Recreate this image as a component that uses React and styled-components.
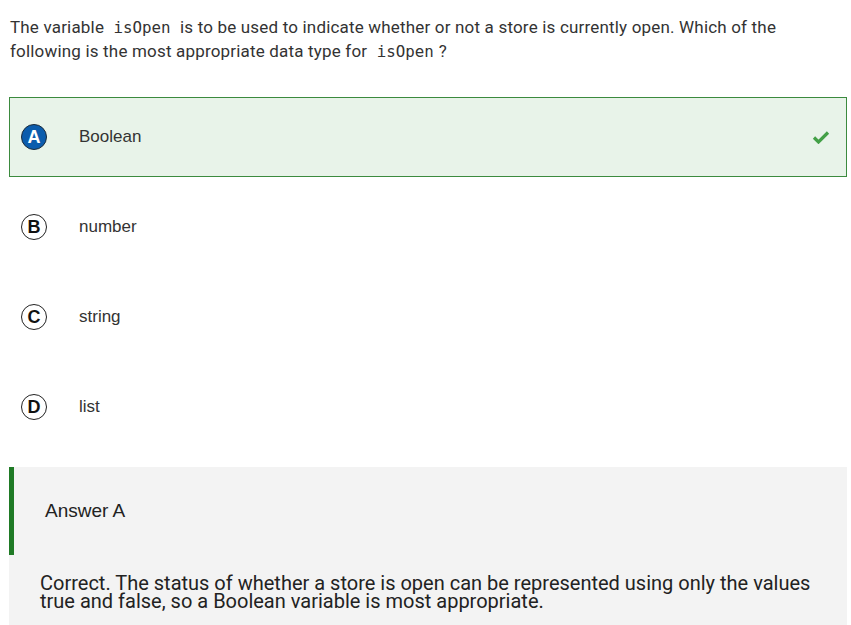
import React from 'react';
import styled, { createGlobalStyle } from 'styled-components';

const GlobalStyle = createGlobalStyle`
  body {
    margin: 0;
    background: #ffffff;
    font-family: Roboto, "Liberation Sans", sans-serif;
  }
`;

const Page = styled.div`
  width: 851px;
  padding: 15px 4px 0 9px;
  box-sizing: border-box;
`;

const Question = styled.p`
  max-width: 800px;
  margin: 0 0 34px 1px;
  font-size: 17px;
  line-height: 24px;
  letter-spacing: 0.18px;
  color: #333333;
`;

const Code = styled.code`
  font-family: "DejaVu Sans Mono", monospace;
  font-size: 15.8px;
  line-height: 1;
  letter-spacing: 0;
  padding: 0 5px;
`;

const Options = styled.div`
  display: flex;
  flex-direction: column;
  gap: 10px;
`;

const Option = styled.div`
  display: flex;
  align-items: center;
  height: 80px;
  box-sizing: border-box;
  padding: 0 16px 0 11px;
  border: 1px solid ${(p) => (p.$correct ? '#3b8a3e' : 'transparent')};
  background: ${(p) => (p.$correct ? '#e8f3e9' : 'transparent')};
  font-family: "Liberation Sans", Arial, sans-serif;
  font-size: 17px;
  color: #333333;
`;

const Letter = styled.span`
  width: 26px;
  height: 26px;
  border-radius: 50%;
  box-sizing: border-box;
  border: 1.5px solid ${(p) => (p.$selected ? '#1a2a3a' : '#222222')};
  background: ${(p) => (p.$selected ? '#0b5cad' : '#ffffff')};
  color: ${(p) => (p.$selected ? '#ffffff' : '#111111')};
  display: flex;
  align-items: center;
  justify-content: center;
  font-family: "Liberation Sans", Arial, sans-serif;
  font-weight: 700;
  font-size: 18px;
  flex-shrink: 0;
`;

const Label = styled.span`
  margin-left: 32px;
  flex: 1;
`;

const Answer = styled.div`
  margin-top: 20px;
  background: #f3f3f3;
`;

const AnswerHead = styled.div`
  height: 88px;
  display: flex;
  align-items: center;
  border-left: 5px solid #1f7a25;
  padding-left: 31px;
  font-family: "Liberation Sans", Arial, sans-serif;
  font-size: 19px;
  color: #222222;
`;

const Explanation = styled.p`
  margin: 0;
  padding: 19px 20px 20px 31px;
  font-family: Roboto, sans-serif;
  font-size: 20px;
  line-height: 18px;
  color: #222222;
`;

const Check = () => (
  <svg width="18" height="14" viewBox="0 0 18 14">
    <path d="M2 7.5 L6.5 12 L16 2.5" fill="none" stroke="#43a047" strokeWidth="3.2" />
  </svg>
);

const options = [
  { key: 'A', text: 'Boolean', correct: true },
  { key: 'B', text: 'number' },
  { key: 'C', text: 'string' },
  { key: 'D', text: 'list' },
];

export default function App() {
  return (
    <Page>
      <GlobalStyle />
      <Question>
        The variable <Code>isOpen</Code> is to be used to indicate whether or not a store is
        currently open. Which of the following is the most appropriate data type for{' '}
        <Code>isOpen</Code>?
      </Question>
      <Options>
        {options.map((o) => (
          <Option key={o.key} $correct={o.correct}>
            <Letter $selected={o.correct}>{o.key}</Letter>
            <Label>{o.text}</Label>
            {o.correct && <Check />}
          </Option>
        ))}
      </Options>
      <Answer>
        <AnswerHead>Answer A</AnswerHead>
        <Explanation>
          Correct. The status of whether a store is open can be represented using only the values
          true and false, so a Boolean variable is most appropriate.
        </Explanation>
      </Answer>
    </Page>
  );
}
